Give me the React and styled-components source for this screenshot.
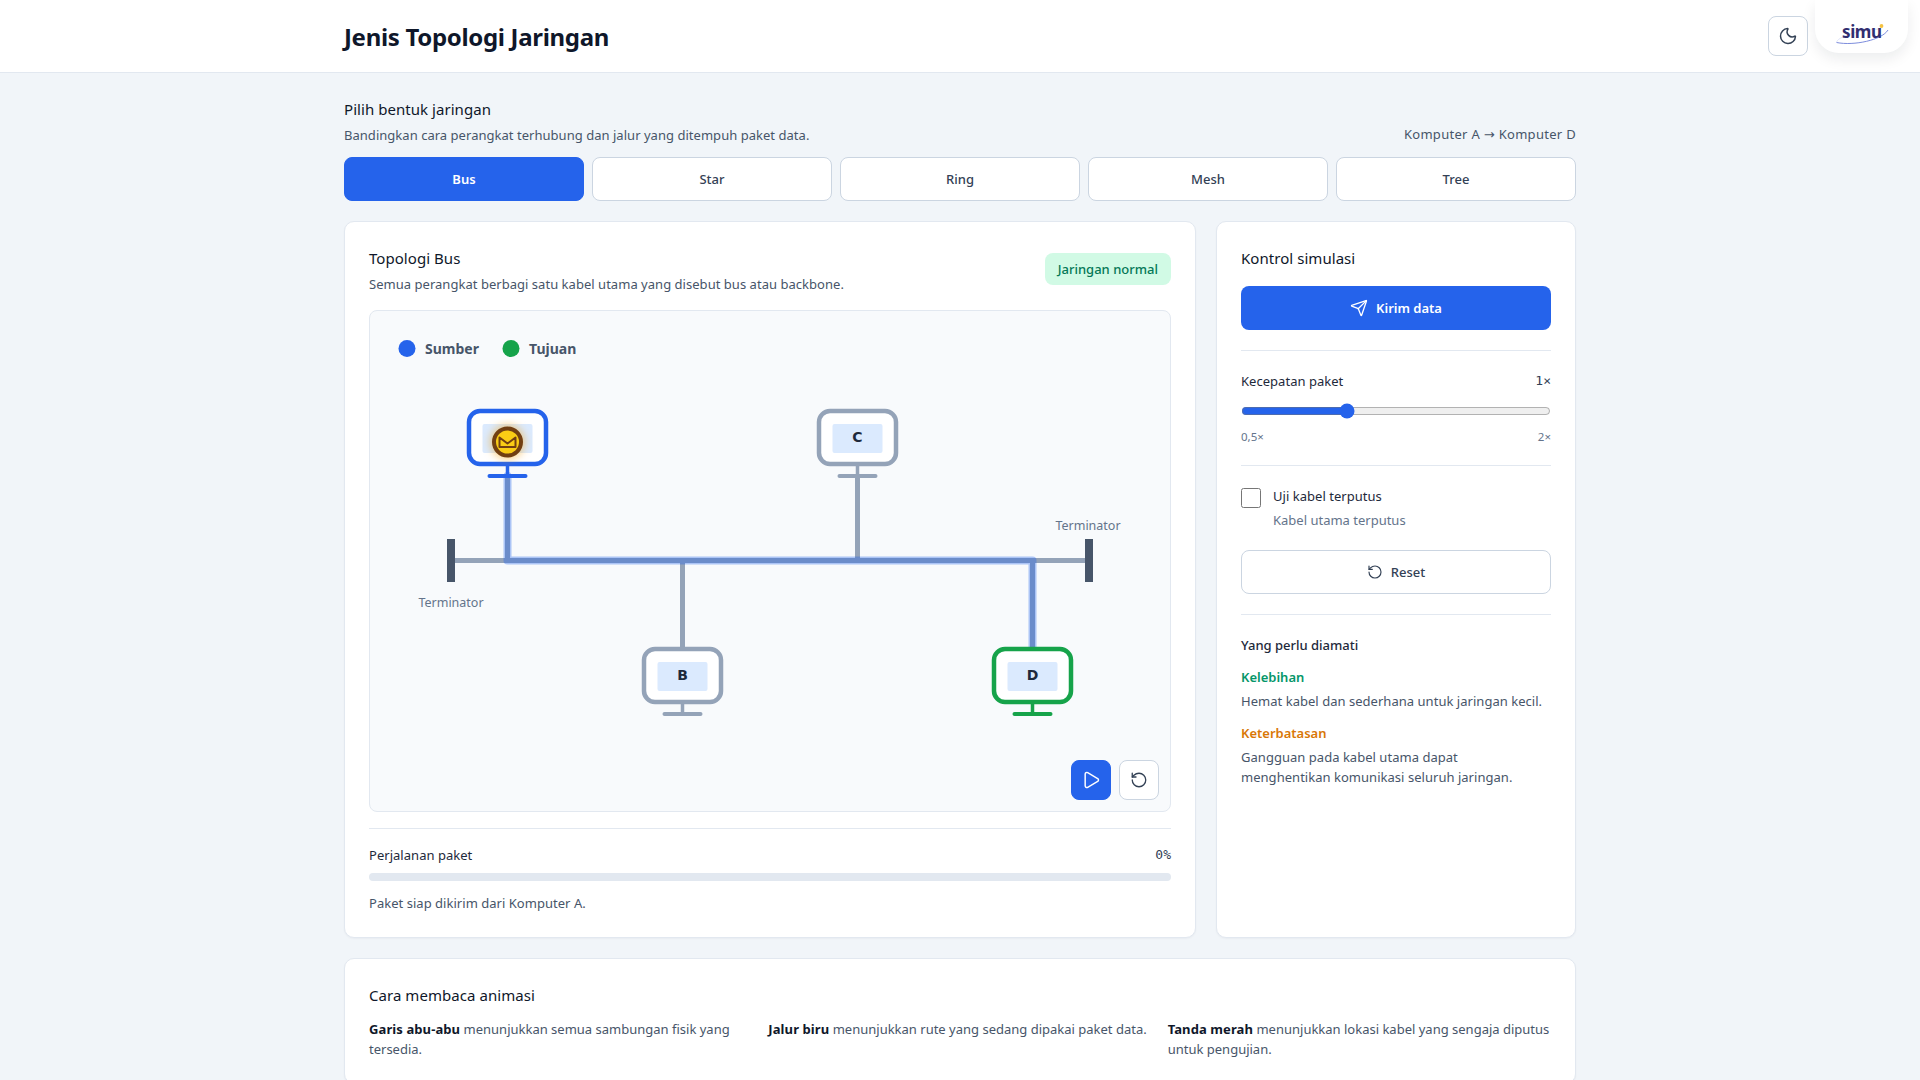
import React from "react";
import styled, { createGlobalStyle } from "styled-components";
import { Moon, Send, Play, RotateCcw } from "lucide-react";

const Global = createGlobalStyle`
  * { box-sizing: border-box; }
  html, body { margin: 0; padding: 0; background: #f1f5f9; }
  body { font-family: "Noto Sans", "Liberation Sans", sans-serif; color: #0f172a; }
`;

const Header = styled.header`
  position: relative;
  height: 73px;
  background: #fff;
  border-bottom: 1px solid #e2e8f0;
`;
const HeaderInner = styled.div`
  max-width: 1280px;
  height: 74px;
  margin: 0 auto;
  padding: 0 24px;
  display: flex;
  align-items: center;
`;
const Title = styled.h1`
  margin: 0;
  font-size: 24px;
  line-height: 32px;
  font-weight: 700;
  letter-spacing: -0.32px;
  color: #0f172a;
`;
const Tools = styled.div`
  position: absolute;
  top: 16px;
  right: 112px;
`;
const IconButton = styled.button`
  width: 40px;
  height: 40px;
  padding: 0;
  display: flex;
  align-items: center;
  justify-content: center;
  border-radius: 8px;
  border: 1px solid ${(p) => (p.$primary ? "#2563eb" : "#cbd5e1")};
  background: ${(p) => (p.$primary ? "#2563eb" : "#fff")};
  color: ${(p) => (p.$primary ? "#fff" : "#334155")};
`;
const LogoPill = styled.div`
  position: absolute;
  top: 0;
  right: 12px;
  width: 93px;
  height: 53px;
  padding-top: 6px;
  border-radius: 0 0 24px 24px;
  background: #fff;
  box-shadow: 0 6px 14px rgba(15, 23, 42, 0.08);
  display: flex;
  align-items: center;
  justify-content: center;
`;

const Page = styled.main`
  max-width: 1280px;
  margin: 0 auto;
  padding: 24px 24px 24px;
`;
const IntroRow = styled.div`
  display: flex;
  justify-content: space-between;
  align-items: flex-end;
  margin-top: 3px;
`;
const SectionTitle = styled.h2`
  margin: 0;
  font-size: 15px;
  line-height: 24px;
  font-weight: 450;
  letter-spacing: 0.05px;
  color: #0f172a;
`;
const Muted = styled.p`
  margin: ${(p) => p.$m || "0"};
  font-size: 13px;
  line-height: 20px;
  letter-spacing: 0.03px;
  color: ${(p) => p.$c || "#475569"};
`;
const RouteText = styled(Muted)`
  letter-spacing: 0.3px;
`;
const ExplainText = styled(Muted)`
  letter-spacing: 0;
`;
const Arrow = styled.span`
  font-family: "DejaVu Sans", sans-serif;
`;
const Tabs = styled.div`
  display: grid;
  grid-template-columns: repeat(5, 1fr);
  gap: 8px;
  margin-top: 12px;
`;
const Tab = styled.button`
  height: 44px;
  border-radius: 8px;
  font: ${(p) => (p.$active ? 600 : 500)} 13px "Noto Sans", sans-serif;
  border: 1px solid ${(p) => (p.$active ? "#2563eb" : "#cbd5e1")};
  background: ${(p) => (p.$active ? "#2563eb" : "#fff")};
  color: ${(p) => (p.$active ? "#fff" : "#334155")};
`;
const MainGrid = styled.div`
  display: grid;
  grid-template-columns: 852px 360px;
  gap: 20px;
  margin-top: 20px;
`;
const Card = styled.section`
  background: #fff;
  border: 1px solid #e2e8f0;
  border-radius: 10px;
  box-shadow: 0 1px 2px rgba(15, 23, 42, 0.04);
  padding: 24px;
`;
const SimCard = styled(Card)`
  height: 717px;
`;
const ExplainCard = styled(Card)`
  margin-top: 20px;
`;
const CardHead = styled.div`
  display: flex;
  justify-content: space-between;
  align-items: flex-start;
`;
const Badge = styled.span`
  margin-top: 7px;
  height: 32px;
  padding: 0 13px;
  display: flex;
  align-items: center;
  border-radius: 8px;
  background: #d1fae5;
  color: #047857;
  font-size: 13px;
  font-weight: 500;
`;
const Canvas = styled.div`
  position: relative;
  margin-top: 16px;
  height: 502px;
  background: #f8fafc;
  border: 1px solid #e2e8f0;
  border-radius: 8px;
`;
const Diagram = styled.svg`
  display: block;
  width: 100%;
  height: 100%;
`;
const CanvasActions = styled.div`
  position: absolute;
  right: 11px;
  bottom: 11px;
  display: flex;
  gap: 8px;
`;
const ProgressBlock = styled.div`
  margin-top: 16px;
  padding-top: 16px;
  border-top: 1px solid #e2e8f0;
`;
const SplitRow = styled.div`
  display: flex;
  justify-content: space-between;
  align-items: center;
`;
const RowLabel = styled.span`
  display: block;
  font-size: 13px;
  line-height: 20px;
  font-weight: 450;
  letter-spacing: 0.03px;
  color: #1e293b;
`;
const Mono = styled.span`
  font-family: "DejaVu Sans Mono", monospace;
  font-size: 13px;
  line-height: 20px;
  color: #334155;
`;
const Track = styled.div`
  height: 8px;
  margin-top: 8px;
  background: #e2e8f0;
  border-radius: 4px;
`;
const PrimaryButton = styled.button`
  width: 100%;
  height: 44px;
  margin-top: 16px;
  display: flex;
  align-items: center;
  justify-content: center;
  gap: 8px;
  border: 0;
  border-radius: 8px;
  background: #2563eb;
  color: #fff;
  font: 600 13px "Noto Sans", sans-serif;
`;
const OutlineButton = styled.button`
  width: 100%;
  height: 44px;
  margin-top: 20px;
  display: flex;
  align-items: center;
  justify-content: center;
  gap: 8px;
  border: 1px solid #cbd5e1;
  border-radius: 8px;
  background: #fff;
  color: #334155;
  font: 500 13px "Noto Sans", sans-serif;
`;
const Block = styled.div`
  margin-top: 20px;
  padding-top: ${(p) => p.$pt || "20px"};
  border-top: 1px solid #e2e8f0;
`;
const Range = styled.input`
  display: block;
  width: 100%;
  height: 16px;
  margin: 12px 0 0;
  accent-color: #2563eb;
`;
const Scale = styled.div`
  display: flex;
  justify-content: space-between;
  margin-top: 10px;
  font-size: 11.5px;
  line-height: 16px;
  color: #64748b;
`;
const CheckRow = styled.label`
  display: flex;
  gap: 12px;
  align-items: flex-start;
`;
const Check = styled.input`
  width: 20px;
  height: 20px;
  margin: 0;
  flex: none;
`;
const CheckText = styled.div`
  margin-top: -2px;
`;
const SubLabel = styled.div`
  margin-top: 4px;
  font-size: 13px;
  line-height: 20px;
  color: #64748b;
`;
const Strong = styled.div`
  margin-top: ${(p) => p.$m || "0"};
  font-size: 13px;
  line-height: 20px;
  font-weight: ${(p) => p.$w || 600};
  color: ${(p) => p.$c || "#1e293b"};
`;
const ExplainGrid = styled.div`
  display: grid;
  grid-template-columns: repeat(3, 1fr);
  gap: 16px;
  margin-top: 12px;
`;
const B = styled.strong`
  font-weight: 700;
  letter-spacing: 0.1px;
  color: #0f172a;
`;

const Monitor = ({ x, y, color, label }) => (
  <g>
    <rect x={x - 38.5} y={y + 2} width={77} height={53} rx={11} fill="#fff" stroke={color} strokeWidth={4.5} />
    <rect x={x - 25} y={y + 15} width={50} height={29} rx={2} fill="#dbeafe" />
    <line x1={x} y1={y + 57} x2={x} y2={y + 67} stroke={color} strokeWidth={3.5} />
    <line x1={x - 18} y1={y + 67} x2={x + 18} y2={y + 67} stroke={color} strokeWidth={4} strokeLinecap="round" />
    {label && (
      <text x={x} y={y + 33} textAnchor="middle" fontFamily="'DejaVu Sans', sans-serif" fontWeight="700" fontSize="14" fill="#1e293b">
        {label}
      </text>
    )}
  </g>
);

const Logo = () => (
  <svg width="56" height="36" viewBox="0 -10 56 36">
    <path d="M2.5 20.5 C 20 24, 48 18, 54 8" fill="none" stroke="#6d7fd8" strokeWidth="0.9" />
    <path d="M2.5 20.5 C 3 15, 24 8, 46 7" fill="none" stroke="#c3cbf0" strokeWidth="0.5" />
    <text x="8" y="15.7" fontFamily="'Noto Sans', sans-serif" fontWeight="700" fontSize="17" letterSpacing="-0.4" fill="#312e6f">
      simu
    </text>
    <circle cx="47.5" cy="4" r="1.9" fill="#f5c242" />
  </svg>
);

const GREY = "#94a3b8";
const ROUTE = "M507.5 476 V560.5 H1032.5 V648";
const SANS = "'Noto Sans', sans-serif";

export default function App() {
  return (
    <>
      <Global />
      <Header>
        <HeaderInner>
          <Title>Jenis Topologi Jaringan</Title>
        </HeaderInner>
        <Tools>
          <IconButton aria-label="Tema">
            <Moon size={20} strokeWidth={1.75} />
          </IconButton>
        </Tools>
        <LogoPill>
          <Logo />
        </LogoPill>
      </Header>
      <Page>
        <SectionTitle>Pilih bentuk jaringan</SectionTitle>
        <IntroRow>
          <Muted>Bandingkan cara perangkat terhubung dan jalur yang ditempuh paket data.</Muted>
          <RouteText>Komputer A <Arrow>→</Arrow> Komputer D</RouteText>
        </IntroRow>
        <Tabs>
          {["Bus", "Star", "Ring", "Mesh", "Tree"].map((t, i) => (
            <Tab key={t} $active={i === 0}>
              {t}
            </Tab>
          ))}
        </Tabs>
        <MainGrid>
          <SimCard>
            <CardHead>
              <div>
                <SectionTitle>Topologi Bus</SectionTitle>
                <Muted $m="4px 0 0">Semua perangkat berbagi satu kabel utama yang disebut bus atau backbone.</Muted>
              </div>
              <Badge>Jaringan normal</Badge>
            </CardHead>
            <Canvas>
              <Diagram viewBox="370 311 800 500">
                <circle cx="407" cy="348.5" r="8.5" fill="#2563eb" />
                <text x="425" y="353.5" fontFamily={SANS} fontWeight="700" fontSize="14" fill="#475569">Sumber</text>
                <circle cx="511" cy="348.5" r="8.5" fill="#16a34a" />
                <text x="529" y="353.5" fontFamily={SANS} fontWeight="700" fontSize="14" fill="#475569">Tujuan</text>

                <g stroke={GREY} strokeWidth="5" fill="none">
                  <line x1="455" y1="560.5" x2="1085" y2="560.5" />
                  <line x1="507.5" y1="476" x2="507.5" y2="560" />
                  <line x1="857.5" y1="476" x2="857.5" y2="560" />
                  <line x1="682.5" y1="560" x2="682.5" y2="648" />
                  <line x1="1032.5" y1="560" x2="1032.5" y2="648" />
                </g>
                <rect x="447" y="539" width="8" height="43" fill="#475569" />
                <rect x="1085" y="539" width="8" height="43" fill="#475569" />
                <text x="451" y="607" textAnchor="middle" fontFamily={SANS} fontSize="12.5" fill="#64748b">Terminator</text>
                <text x="1088" y="530" textAnchor="middle" fontFamily={SANS} fontSize="12.5" fill="#64748b">Terminator</text>

                <path d={ROUTE} fill="none" stroke="#2563eb" strokeOpacity="0.36" strokeWidth="8" strokeLinejoin="round" strokeLinecap="round" />

                <Monitor x={507.5} y={409} color="#2563eb" />
                <Monitor x={857.5} y={409} color={GREY} label="C" />
                <Monitor x={682.5} y={647} color={GREY} label="B" />
                <Monitor x={1032.5} y={647} color="#16a34a" label="D" />

                <defs>
                  <filter id="glow" x="-60%" y="-60%" width="220%" height="220%">
                    <feGaussianBlur stdDeviation="4" />
                  </filter>
                </defs>
                <circle cx="507.5" cy="442" r="17" fill="#f59e0b" fillOpacity="0.5" filter="url(#glow)" />
                <circle cx="507.5" cy="442" r="13.5" fill="#facc15" stroke="#713f12" strokeWidth="4" />
                <path d="M499.5 437.5 L507.5 443.5 L515.5 437.5 V447 H499.5 Z" fill="none" stroke="#713f12" strokeWidth="2" strokeLinejoin="round" />
              </Diagram>
              <CanvasActions>
                <IconButton $primary aria-label="Putar">
                  <Play size={20} strokeWidth={1.75} />
                </IconButton>
                <IconButton aria-label="Ulang">
                  <RotateCcw size={18} strokeWidth={1.75} />
                </IconButton>
              </CanvasActions>
            </Canvas>
            <ProgressBlock>
              <SplitRow>
                <RowLabel>Perjalanan paket</RowLabel>
                <Mono>0%</Mono>
              </SplitRow>
              <Track />
              <Muted $m="12px 0 0">Paket siap dikirim dari Komputer A.</Muted>
            </ProgressBlock>
          </SimCard>

          <SimCard>
            <SectionTitle>Kontrol simulasi</SectionTitle>
            <PrimaryButton>
              <Send size={18} strokeWidth={1.75} />
              Kirim data
            </PrimaryButton>
            <Block>
              <SplitRow>
                <RowLabel>Kecepatan paket</RowLabel>
                <Mono>1×</Mono>
              </SplitRow>
              <Range type="range" min="0.5" max="2" step="0.1" defaultValue="1" />
              <Scale>
                <span>0,5×</span>
                <span>2×</span>
              </Scale>
            </Block>
            <Block $pt="22px">
              <CheckRow>
                <Check type="checkbox" />
                <CheckText>
                  <RowLabel>Uji kabel terputus</RowLabel>
                  <SubLabel>Kabel utama terputus</SubLabel>
                </CheckText>
              </CheckRow>
              <OutlineButton>
                <RotateCcw size={16} strokeWidth={1.75} />
                Reset
              </OutlineButton>
            </Block>
            <Block>
              <Strong $w={500}>Yang perlu diamati</Strong>
              <Strong $m="12px" $c="#059669">Kelebihan</Strong>
              <Muted $m="4px 0 0">Hemat kabel dan sederhana untuk jaringan kecil.</Muted>
              <Strong $m="12px" $c="#d97706">Keterbatasan</Strong>
              <Muted $m="4px 0 0">Gangguan pada kabel utama dapat<br />menghentikan komunikasi seluruh jaringan.</Muted>
            </Block>
          </SimCard>
        </MainGrid>
        <ExplainCard>
          <SectionTitle>Cara membaca animasi</SectionTitle>
          <ExplainGrid>
            <ExplainText><B>Garis abu-abu</B> menunjukkan semua sambungan fisik yang tersedia.</ExplainText>
            <ExplainText><B>Jalur biru</B> menunjukkan rute yang sedang dipakai paket data.</ExplainText>
            <ExplainText><B>Tanda merah</B> menunjukkan lokasi kabel yang sengaja diputus untuk pengujian.</ExplainText>
          </ExplainGrid>
        </ExplainCard>
      </Page>
    </>
  );
}
